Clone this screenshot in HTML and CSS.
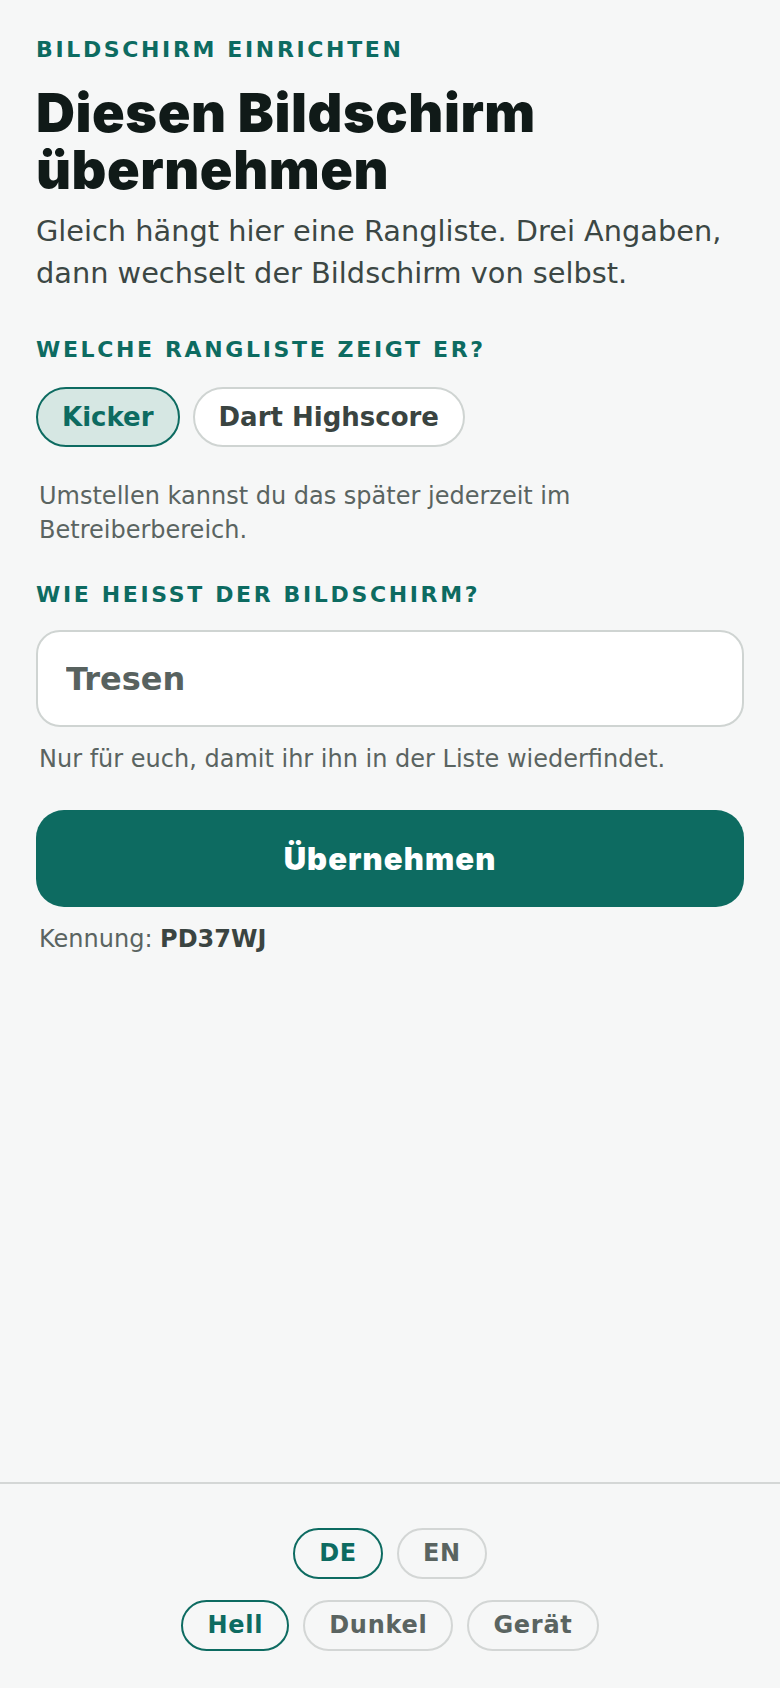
FILE: index.html
```html
<!DOCTYPE html>
<html lang="de">
<head>
<meta charset="utf-8">
<title>Bildschirm einrichten</title>
<link rel="stylesheet" href="styles.css">
</head>
<body>
<div class="page">
  <main class="main">
    <p class="eyebrow">Bildschirm einrichten</p>
    <h1 class="title">Diesen Bildschirm übernehmen</h1>
    <p class="intro">Gleich hängt hier eine Rangliste. Drei Angaben, dann wechselt der Bildschirm von selbst.</p>

    <p class="label label-board">Welche Rangliste zeigt er?</p>
    <div class="chips">
      <button class="chip is-on" type="button">Kicker</button>
      <button class="chip" type="button">Dart Highscore</button>
    </div>
    <p class="hint hint-board">Umstellen kannst du das später jederzeit im Betreiberbereich.</p>

    <p class="label label-name">Wie heißt der Bildschirm?</p>
    <input class="name-input" type="text" value="Tresen">
    <p class="hint hint-name">Nur für euch, damit ihr ihn in der Liste wiederfindet.</p>

    <button class="submit" type="button">Übernehmen</button>
    <p class="hint code">Kennung: <strong>PD37WJ</strong></p>
  </main>

  <footer class="footer">
    <div class="pills">
      <button class="pill is-on" type="button">DE</button>
      <button class="pill" type="button">EN</button>
    </div>
    <div class="pills">
      <button class="pill is-on" type="button">Hell</button>
      <button class="pill" type="button">Dunkel</button>
      <button class="pill" type="button">Gerät</button>
    </div>
  </footer>
</div>
</body>
</html>
```

FILE: styles.css
```css
* { box-sizing: border-box; }

html, body {
  margin: 0;
  padding: 0;
  background: #f6f7f7;
}

body {
  font-family: "DejaVu Sans", Verdana, sans-serif;
  color: #3b4643;
}

.page {
  min-height: 1688px;
  display: flex;
  flex-direction: column;
}

.main {
  flex: 1;
  display: flex;
  flex-direction: column;
  align-items: stretch;
  padding: 37px 36px 0;
}

p { margin: 0; }

.eyebrow,
.label {
  font-size: 22px;
  line-height: 26px;
  font-weight: 700;
  letter-spacing: 0.12em;
  text-transform: uppercase;
  color: #0d6b61;
}

.title {
  margin: 21px 0 0;
  font-family: "Inter", "Liberation Sans", sans-serif;
  font-weight: 900;
  font-size: 54px;
  line-height: 57px;
  letter-spacing: 0.01em;
  color: #101a18;
}

.intro {
  margin-top: 13px;
  font-size: 28.8px;
  line-height: 1.45;
  color: #3c4744;
}

.label-board { margin-top: 42px; }
.label-name { margin-top: 35px; }

.chips {
  display: flex;
  gap: 13px;
  margin-top: 24px;
}

.chip {
  font-family: "DejaVu Sans", Verdana, sans-serif;
  font-size: 26px;
  line-height: 32px;
  font-weight: 700;
  padding: 12px 24px;
  border-radius: 999px;
  border: 2px solid #cfd4d2;
  background: #ffffff;
  color: #3a4441;
}

.chip.is-on {
  border-color: #0d6b61;
  background: #d6e7e3;
  color: #0d6b61;
}

.hint {
  font-size: 24px;
  line-height: 34.3px;
  color: #5a6461;
  padding-left: 3px;
}

.hint-board { margin-top: 32px; }

.name-input {
  display: block;
  width: 100%;
  height: 97px;
  margin-top: 22px;
  padding: 0 28px;
  border: 2px solid #cfd4d2;
  border-radius: 24px;
  background: #ffffff;
  font-family: "DejaVu Sans", Verdana, sans-serif;
  font-size: 32px;
  font-weight: 700;
  color: #58625f;
  outline: none;
}

.hint-name { margin-top: 14.5px; }

.submit {
  display: block;
  width: 100%;
  height: 97px;
  margin-top: 34px;
  border: 0;
  border-radius: 28px;
  background: #0d6b61;
  color: #ffffff;
  font-family: "Inter", "Liberation Sans", sans-serif;
  font-weight: 900;
  font-size: 31px;
  letter-spacing: 0.035em;
}

.code { margin-top: 15px; }

.code strong {
  font-weight: 700;
  color: #3a4441;
}

.footer {
  border-top: 2px solid #d4d7d6;
  padding: 44px 36px 37px;
  display: flex;
  flex-direction: column;
  align-items: center;
  gap: 21px;
}

.pills {
  display: flex;
  gap: 14px;
  justify-content: center;
}

.pill {
  font-family: "DejaVu Sans", Verdana, sans-serif;
  font-size: 24px;
  line-height: 31px;
  font-weight: 700;
  letter-spacing: 0.03em;
  padding: 8px 24px;
  border-radius: 999px;
  border: 2px solid #d3d6d5;
  background: transparent;
  color: #5a6461;
}

.pill.is-on {
  border-color: #0d6b61;
  color: #0d6b61;
}
```
